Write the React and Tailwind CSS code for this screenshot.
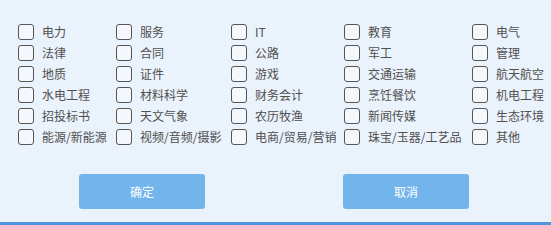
import { useState } from "react"

const ITEMS = [
  ["电力", "服务", "IT", "教育", "电气"],
  ["法律", "合同", "公路", "军工", "管理"],
  ["地质", "证件", "游戏", "交通运输", "航天航空"],
  ["水电工程", "材料科学", "财务会计", "烹饪餐饮", "机电工程"],
  ["招投标书", "天文气象", "农历牧渔", "新闻传媒", "生态环境"],
  ["能源/新能源", "视频/音频/摄影", "电商/贸易/营销", "珠宝/玉器/工艺品", "其他"],
]

const Check = ({ label, checked, onToggle }) => (
  <label className="flex h-[21px] cursor-pointer items-center gap-2 whitespace-nowrap">
    <span
      className={
        checked
          ? "grid h-4 w-4 shrink-0 place-items-center rounded-[3px] border-[1.5px] border-[#555] bg-[#6fb3ec]"
          : "grid h-4 w-4 shrink-0 place-items-center rounded-[3px] border-[1.5px] border-[#555] bg-[#f4f8fc]"
      }
      onClick={onToggle}
    />
    <span className="text-[12px] leading-none text-[#505050]">{label}</span>
  </label>
)

export default function App() {
  const [picked, setPicked] = useState({})
  const toggle = (k) => setPicked((p) => ({ ...p, [k]: !p[k] }))

  return (
    <div
      className="flex h-[225px] w-[551px] flex-col border-b-[3px] border-[#4f94dc] bg-[#eaf2fb]"
      style={{ fontFamily: '"Noto Sans CJK SC", "Noto Sans", sans-serif' }}
    >
      {/* category grid */}
      <div className="grid grid-cols-[98px_115px_113px_128px_1fr] pl-[18px] pt-[21px]">
        {ITEMS.flat().map((label) => (
          <Check key={label} label={label} checked={!!picked[label]} onToggle={() => toggle(label)} />
        ))}
      </div>

      {/* actions */}
      <div className="mt-[27px] flex pl-[79px]">
        <button className="h-[35px] w-[126px] rounded-[3px] bg-[#72b4ec] text-[12px] text-white">确定</button>
        <button className="ml-[138px] h-[35px] w-[126px] rounded-[3px] bg-[#72b4ec] text-[12px] text-white">取消</button>
      </div>
    </div>
  )
}
